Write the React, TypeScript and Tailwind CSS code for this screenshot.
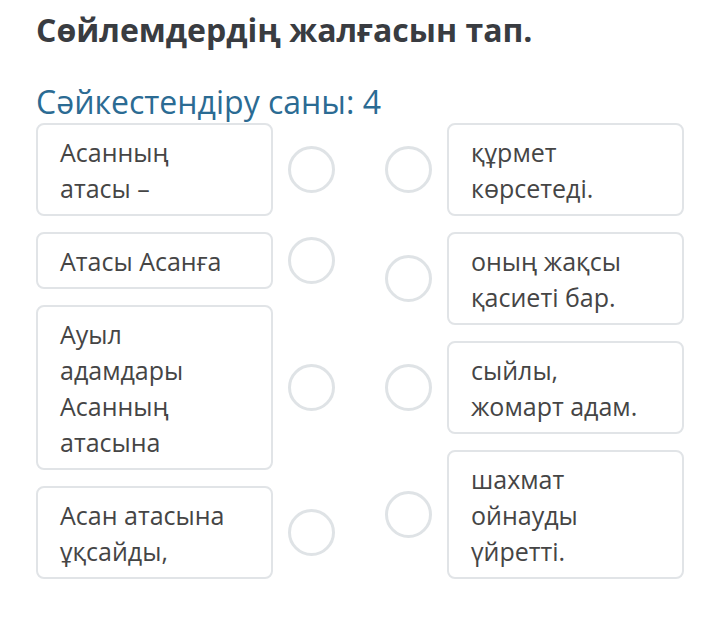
const left = [
  'Асанның атасы –',
  'Атасы Асанға',
  'Ауыл адамдары Асанның атасына',
  'Асан атасына ұқсайды,',
]

const right = [
  'құрмет көрсетеді.',
  'оның жақсы қасиеті бар.',
  'сыйлы, жомарт адам.',
  'шахмат ойнауды үйретті.',
]

function Card({ text }: { text: string }) {
  return (
    <div className="w-[237px] shrink-0 rounded-lg border-2 border-[#e1e4e7] bg-white pt-[9px] pb-[8px] pl-[22px] pr-[34px] text-[25px] leading-[36px] text-[#454545]">
      {text}
    </div>
  )
}

function Dot() {
  return <div className="h-[47px] w-[47px] shrink-0 rounded-full border-[3px] border-[#dfe3e6] bg-white" />
}

export default function App() {
  return (
    <div className="min-h-[635px] w-[720px] bg-white pl-[36px] pt-[8px] font-['Open_Sans',sans-serif]">
      <h1 className="text-[32px] font-bold leading-[44px] text-[#393c41]">
        Сөйлемдердің жалғасын тап.
      </h1>

      <p className="mt-[30px] text-[32px] leading-[40px] text-[#2b6b93]">
        Сәйкестендіру саны: 4
      </p>

      <div className="mt-[1px] flex">
        {/* left column: sentence beginnings */}
        <div className="flex flex-col gap-[16px]">
          {left.map((t) => (
            <div key={t} className="flex items-center gap-[15px]">
              <Card text={t} />
              <Dot />
            </div>
          ))}
        </div>

        {/* right column: endings */}
        <div className="ml-[50px] flex flex-col gap-[16px]">
          {right.map((t) => (
            <div key={t} className="flex items-center gap-[15px]">
              <Dot />
              <Card text={t} />
            </div>
          ))}
        </div>
      </div>
    </div>
  )
}
